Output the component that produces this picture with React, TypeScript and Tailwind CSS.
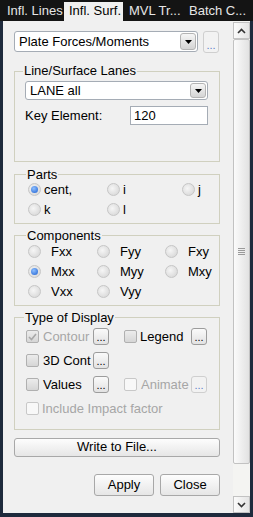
import React from "react";

const tabs = [
  { label: "Infl. Lines", w: "w-[61px]", pl: "pl-[4px]" },
  { label: "Infl. Surf.", w: "w-[59px]", pl: "pl-[5px]", active: true },
  { label: "MVL Tr...", w: "w-[61px]", pl: "pl-[6px]" },
  { label: "Batch C...", w: "w-[66px]", pl: "pl-[5px]" },
];

function Arrow() {
  return (
    <svg width="9" height="6" viewBox="0 0 9 6">
      <path d="M1 1h7L4.5 5z" fill="#000" />
    </svg>
  );
}

function Combo({ label, className }: { label: string; className: string }) {
  return (
    <div className={`flex bg-white border border-[#a5acb5] rounded-[3px] ${className}`}>
      <span className="flex-1 pl-[4px] flex items-center">{label}</span>
      <span className="w-[16px] m-[1px] rounded-[3px] border border-[#b4b4b4] bg-gradient-to-b from-[#f6f6f6] to-[#d4d4d4] flex items-center justify-center">
        <Arrow />
      </span>
    </div>
  );
}

function Dots({ disabled = false, className = "" }: { disabled?: boolean; className?: string }) {
  return (
    <span
      className={`w-[16px] h-[17px] rounded-[3px] border flex items-end justify-center pb-[1px] text-[11px] leading-[11px] ${
        disabled
          ? "border-[#cfcfcf] bg-[#f2f2f2] text-[#5b7fc8]"
          : "border-[#9c9c9c] bg-gradient-to-b from-[#fafafa] to-[#e2e2e2] text-black"
      } ${className}`}
    >
      ...
    </span>
  );
}

function Radio({ checked = false }: { checked?: boolean }) {
  return (
    <span className="w-[13px] h-[13px] rounded-full border border-[#c6c6c6] bg-[radial-gradient(circle_at_40%_40%,#f6f6f6,#d2d2d2)] flex items-center justify-center shrink-0">
      {checked && <span className="w-[7px] h-[7px] rounded-full bg-[radial-gradient(circle_at_40%_35%,#8fc0ff,#1c5fd1)]" />}
    </span>
  );
}

function Check({ checked = false, disabled = false }: { checked?: boolean; disabled?: boolean }) {
  return (
    <span
      className={`w-[13px] h-[13px] rounded-[2px] border flex items-center justify-center shrink-0 ${
        disabled && !checked
          ? "border-[#c8c8c8] bg-[#f8f8f8]"
          : "border-[#b0b0b0] bg-gradient-to-b from-[#ececec] to-[#d6d6d6]"
      }`}
    >
      {checked && (
        <svg width="9" height="8" viewBox="0 0 9 8">
          <path d="M1 4l2.5 2.5L8 1" stroke="#a8a8a8" strokeWidth="1.6" fill="none" />
        </svg>
      )}
    </span>
  );
}

function Group({ title, className, children }: { title: string; className: string; children: React.ReactNode }) {
  return (
    <fieldset className={`border border-[#d0d0bf] ${className}`}>
      <legend className="-ml-[2px] px-[1px] leading-[14px]">{title}</legend>
      {children}
    </fieldset>
  );
}

function Btn({ label, className }: { label: string; className: string }) {
  return (
    <button className={`rounded-[3px] border border-[#a8a8a8] bg-gradient-to-b from-[#fdfdfd] to-[#e6e6e6] flex items-center justify-center ${className}`}>
      {label}
    </button>
  );
}

export default function App() {
  return (
    <div className="w-[253px] h-[517px] bg-[#1e2a3c] flex flex-col overflow-hidden font-['Liberation_Sans',Arial,sans-serif] text-[13px] text-black">
      {/* Tabs */}
      <div className="h-[21px] bg-[#141414] flex items-end pl-[3px] shrink-0">
        {tabs.map((t) => (
          <div
            key={t.label}
            className={`${t.w} ${t.pl} h-[19px] leading-[18px] whitespace-nowrap ${
              t.active ? "bg-[#f0f0f0] text-black" : "text-[#e6e6e6]"
            }`}
          >
            {t.label}
          </div>
        ))}
      </div>

      <div className="flex flex-1 min-h-0 pl-[3px] pr-[3px] pb-[4px]">
        {/* Content */}
        <div className="w-[230px] bg-[#f0f0f0] pt-[10px] pl-[11px] pr-[13px] flex flex-col">
          <div className="flex items-start gap-[5px]">
            <Combo label="Plate Forces/Moments" className="w-[184px] h-[21px]" />
            <Dots disabled className="h-[22px]" />
          </div>

          <Group title="Line/Surface Lanes" className="mt-[11px] pl-[10px] pr-[11px] pb-[35px]">
            <Combo label="LANE all" className="mt-[3px] h-[19px]" />
            <div className="flex items-center mt-[6px]">
              <span className="w-[105px]">Key Element:</span>
              <span className="flex-1 h-[19px] bg-white border border-[#a5acb5] pl-[3px] flex items-center">120</span>
            </div>
          </Group>

          <Group title="Parts" className="mt-[6px] pl-[13px] pb-[3px]">
            <div className="grid grid-cols-[79px_75px_1fr] -mt-[2px]">
              {[
                ["cent,", true],
                ["i", false],
                ["j", false],
                ["k", false],
                ["l", false],
              ].map(([l, c]) => (
                <div key={l as string} className="h-[20px] flex items-center gap-[3px]">
                  <Radio checked={c as boolean} />
                  <span>{l as string}</span>
                </div>
              ))}
            </div>
          </Group>

          <Group title="Components" className="mt-[5px] pl-[13px] pb-[3px]">
            <div className="grid grid-cols-[69px_68px_1fr] -mt-[1px]">
              {["Fxx", "Fyy", "Fxy", "Mxx", "Myy", "Mxy", "Vxx", "Vyy"].map((l) => (
                <div key={l} className="h-[20px] flex items-center gap-[10px]">
                  <Radio checked={l === "Mxx"} />
                  <span>{l}</span>
                </div>
              ))}
            </div>
          </Group>

          <Group title="Type of Display" className="mt-[5px] pl-[11px] pb-[8px]">
            <div className="flex flex-col">
              <div className="h-[24px] flex items-center">
                <div className="w-[67px] flex items-center gap-[4px] text-[#a6a6a6]">
                  <Check checked disabled />
                  <span>Contour</span>
                </div>
                <Dots />
                <div className="w-[67px] ml-[15px] flex items-center gap-[3px]">
                  <Check />
                  <span>Legend</span>
                </div>
                <Dots />
              </div>
              <div className="h-[24px] flex items-center">
                <div className="w-[67px] flex items-center gap-[4px]">
                  <Check />
                  <span>3D Cont</span>
                </div>
                <Dots />
              </div>
              <div className="h-[24px] flex items-center">
                <div className="w-[67px] flex items-center gap-[4px]">
                  <Check />
                  <span>Values</span>
                </div>
                <Dots />
                <div className="w-[67px] ml-[15px] flex items-center gap-[4px] text-[#a6a6a6]">
                  <Check disabled />
                  <span>Animate</span>
                </div>
                <Dots disabled />
              </div>
              <div className="h-[24px] flex items-center gap-[3px] text-[#a6a6a6]">
                <Check disabled />
                <span>Include Impact factor</span>
              </div>
            </div>
          </Group>

          <Btn label="Write to File..." className="mt-[8px] h-[19px] w-full" />

          <div className="flex justify-end gap-[6px] mt-[17px]">
            <Btn label="Apply" className="w-[60px] h-[22px]" />
            <Btn label="Close" className="w-[60px] h-[22px]" />
          </div>
        </div>

        {/* Scrollbar */}
        <div className="w-[17px] bg-[#f4f4f2] pt-[1px] flex flex-col">
          <div className="h-[17px] border border-[#c2c2c2] bg-gradient-to-r from-[#fbfbfb] to-[#e4e4e4] flex items-center justify-center">
            <svg width="9" height="6" viewBox="0 0 9 6">
              <path d="M1 5l3.5-3.5L8 5" stroke="#333" strokeWidth="1.6" fill="none" />
            </svg>
          </div>
          <div className="h-[425px] border border-[#c2c2c2] rounded-[2px] bg-gradient-to-r from-[#fbfbfb] to-[#e2e2e2] flex items-center justify-center">
            <div className="flex flex-col gap-[1px]">
              <span className="w-[7px] h-px bg-[#9a9a9a]" />
              <span className="w-[7px] h-px bg-[#9a9a9a]" />
              <span className="w-[7px] h-px bg-[#9a9a9a]" />
              <span className="w-[7px] h-px bg-[#9a9a9a]" />
            </div>
          </div>
          <div className="flex-1" />
          <div className="h-[17px] border border-[#c2c2c2] bg-gradient-to-r from-[#fbfbfb] to-[#e4e4e4] flex items-center justify-center">
            <svg width="9" height="6" viewBox="0 0 9 6">
              <path d="M1 1l3.5 3.5L8 1" stroke="#333" strokeWidth="1.6" fill="none" />
            </svg>
          </div>
        </div>
      </div>
    </div>
  );
}
